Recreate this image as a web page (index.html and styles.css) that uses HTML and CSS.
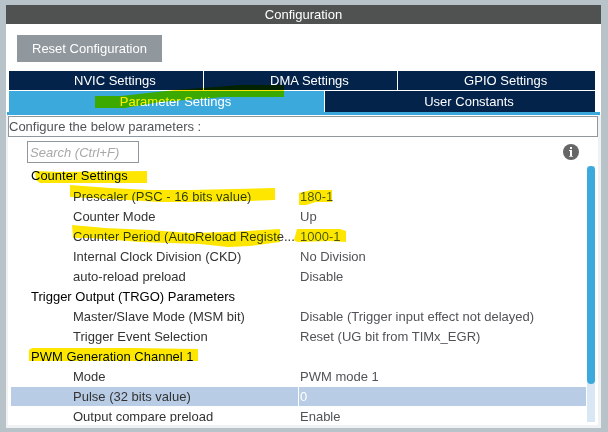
FILE: index.html
```html
<!DOCTYPE html>
<html lang="en">
<head>
<meta charset="UTF-8">
<meta name="viewport" content="width=device-width, initial-scale=1.0">
<title>Configuration</title>
<link rel="stylesheet" href="styles.css">
</head>
<body>

<main class="window">
    <h1 class="title">Configuration</h1>

    <div class="toolbar">
        <button type="button" class="reset-btn">Reset Configuration</button>
    </div>

    <div class="tabs">
        <div class="tab-row">
            <button type="button" class="tab">NVIC Settings</button>
            <button type="button" class="tab">DMA Settings</button>
            <button type="button" class="tab">GPIO Settings</button>
        </div>
        <div class="tab-row tab-row-front">
            <button type="button" class="tab active">Parameter Settings</button>
            <button type="button" class="tab">User Constants</button>
        </div>
    </div>
    <div class="tab-line"></div>

    <section class="panel">
        <p class="hint">Configure the below parameters :</p>

        <div class="search-bar">
            <input type="text" class="search" placeholder="Search (Ctrl+F)" aria-label="Search">
            <button type="button" class="info-btn" aria-label="Information">
                <svg width="16" height="16" viewBox="0 0 16 16">
                    <circle cx="8" cy="8" r="8" fill="#666"/>
                    <path d="M7 3h2v2H7zM6 6h3v7H7V7H6z" fill="#fff"/>
                    <path d="M6 12h4v1H6z" fill="#ccc"/>
                </svg>
            </button>
        </div>

        <div class="tree">
            <div class="tree-view">
                <table class="params">
                    <colgroup><col class="col-name"><col></colgroup>
                    <tbody>
                        <tr class="group"><th colspan="2">Counter Settings</th></tr>
                        <tr><td>Prescaler (PSC - 16 bits value)</td><td>180-1</td></tr>
                        <tr><td>Counter Mode</td><td>Up</td></tr>
                        <tr><td>Counter Period (AutoReload Registe...</td><td>1000-1</td></tr>
                        <tr><td>Internal Clock Division (CKD)</td><td>No Division</td></tr>
                        <tr><td>auto-reload preload</td><td>Disable</td></tr>
                        <tr class="group"><th colspan="2">Trigger Output (TRGO) Parameters</th></tr>
                        <tr><td>Master/Slave Mode (MSM bit)</td><td>Disable (Trigger input effect not delayed)</td></tr>
                        <tr><td>Trigger Event Selection</td><td>Reset (UG bit from TIMx_EGR)</td></tr>
                        <tr class="group"><th colspan="2">PWM Generation Channel 1</th></tr>
                        <tr><td>Mode</td><td>PWM mode 1</td></tr>
                        <tr class="selected"><td>Pulse (32 bits value)</td><td>0</td></tr>
                        <tr><td>Output compare preload</td><td>Enable</td></tr>
                    </tbody>
                </table>
            </div>
            <div class="scrollbar"><div class="thumb"></div></div>
        </div>
    </section>
</main>

<!-- marker strokes -->
<svg class="marker" width="608" height="432" viewBox="0 0 608 432" fill="#ffe600">
    <path d="M95 96H121L175 90L240 85H284V97L225 97L160 102L125 108H95Z"/>
    <path d="M35 171L60 172L147 171V183H40L36 180Z"/>
    <path d="M70 185L110 188L150 190H190L235 189L275 188V200L250 201L190 202L160 202L110 199L70 197Z"/>
    <path d="M299 193L312 190H332V202H316L306 205H299Z"/>
    <path d="M72 225L105 228L150 230L190 233L230 232L280 229V242L250 246L228 247L200 244L140 242L90 238H73Z"/>
    <path d="M297 229H340L346 231V242L330 241L297 242L294 240Z"/>
    <path d="M29 350L32 348H135L198 349V361H29Z"/>
</svg>

</body>
</html>
```
FILE: styles.css
```css
* {
    box-sizing: border-box;
}

body {
    margin: 0;
    padding: 5px 7px 4px 6px;
    height: 100vh;
    background: #b8c3c9;
    font-family: "Liberation Sans", Arial, sans-serif;
    font-size: 13px;
    color: #505357;
    position: relative;
    overflow: hidden;
}

button, input {
    font: inherit;
    border: none;
    border-radius: 0;
    margin: 0;
}

.window {
    height: 100%;
    display: flex;
    flex-direction: column;
    background: #fff;
}

.title {
    margin: 0;
    background: #4f5250;
    color: #fff;
    font-size: 13px;
    font-weight: normal;
    line-height: 19px;
    text-align: center;
}

.toolbar {
    padding: 11px 11px 9px;
}

.reset-btn {
    display: block;
    padding: 0 15px;
    line-height: 27px;
    background: #90979d;
    color: #fff;
}

/* tabs */
.tabs {
    padding: 0 6px 0 3px;
}

.tab-row {
    display: grid;
    grid-template-columns: 64fr 64fr 65fr;
    gap: 1px;
    margin-bottom: 1px;
}

.tab-row-front {
    grid-template-columns: 7fr 6fr;
    margin-bottom: 0;
}

.tab {
    padding: 0 0 0 18px;
    line-height: 19px;
    background: #03234b;
    color: #fff;
}

.tab-row-front .tab {
    line-height: 21px;
}

.tab.active {
    background: #3ba9dc;
}

.tab-line {
    height: 3px;
    margin: 0 1px;
    background: #3ba9dc;
}

/* parameters */
.panel {
    flex: 1;
    min-height: 0;
    display: flex;
    flex-direction: column;
    border: solid #f0f1f2;
    border-width: 0 3px 3px 2px;
    padding: 1px 0 3px;
}

.hint {
    margin: 0;
    border: 1px solid #90979d;
    line-height: 19px;
}

.search-bar {
    display: flex;
    justify-content: space-between;
    align-items: center;
    padding: 4px 19px 3px;
}

.search {
    width: 112px;
    height: 22px;
    padding: 0 2px;
    border: 1px solid #90979d;
    color: #505357;
}

.search::placeholder {
    color: #a8a8a8;
    font-style: italic;
    opacity: 1;
}

.info-btn {
    padding: 0;
    background: none;
    display: flex;
}

.tree {
    flex: 1;
    min-height: 0;
    display: flex;
    gap: 1px;
    padding: 0 3px;
}

.tree-view {
    flex: 1;
    min-width: 0;
    overflow: hidden;
}

.params {
    width: 100%;
    table-layout: fixed;
    border-collapse: collapse;
}

.col-name {
    width: 50%;
}

.params td,
.params th {
    height: 20px;
    padding: 0 1px;
    line-height: 19px;
    font-weight: normal;
    text-align: left;
    white-space: nowrap;
    border-bottom: 1px solid #fff;
}

.params th {
    padding-left: 20px;
    color: #000;
}

.params td:first-child {
    padding-left: 62px;
    color: #333;
    border-right: 1px solid #fff;
}

.params .selected td {
    background: #b8cde5;
}

.params .selected td:last-child {
    color: #fff;
}

.scrollbar {
    width: 8px;
    background: #d9e7f4;
}

.thumb {
    height: 85%;
    background: #3ba9dc;
    border-radius: 4px;
}

.marker {
    position: absolute;
    top: 0;
    left: 0;
    mix-blend-mode: darken;
    pointer-events: none;
}
```
